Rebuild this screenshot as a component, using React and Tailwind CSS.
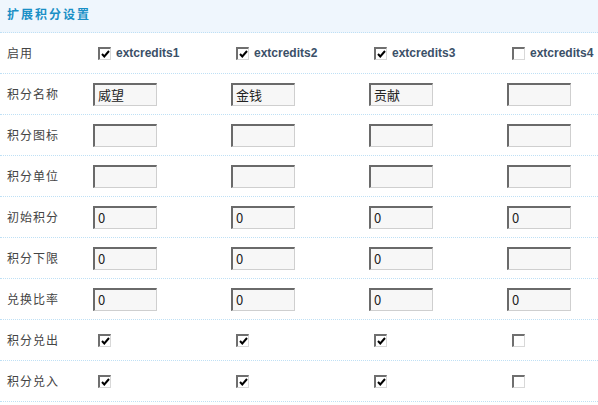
import React from "react";

const CJK = { fontFamily: '"Noto Sans CJK SC", "Noto Sans", sans-serif' };

function Check({ on }) {
  return (
    <span className="inline-flex w-[13px] h-[13px] box-border border-t-2 border-l-2 border-t-[#6f6f6f] border-l-[#6f6f6f] border-b border-r border-b-[#d8d8d8] border-r-[#d8d8d8] bg-white items-center justify-center shrink-0">
      {on && (
        <svg width="9" height="8" viewBox="0 0 9 8">
          <polyline points="1,4 3.3,6.5 8,1" fill="none" stroke="#000" strokeWidth="2" />
        </svg>
      )}
    </span>
  );
}

function Box({ v }) {
  return (
    <div
      className="w-[64px] h-[23px] box-border border-t-2 border-l-2 border-t-[#6a6a6a] border-l-[#6a6a6a] border-b border-r border-b-[#cfcfcf] border-r-[#cfcfcf] bg-[#f7f7f7] flex items-center pl-[3px] text-[13px] text-[#222] leading-none"
      style={CJK}
    >
      {v}
    </div>
  );
}

const rows = [
  { label: "积分名称", type: "box", vals: ["威望", "金钱", "贡献", ""] },
  { label: "积分图标", type: "box", vals: ["", "", "", ""] },
  { label: "积分单位", type: "box", vals: ["", "", "", ""] },
  { label: "初始积分", type: "box", vals: ["0", "0", "0", "0"] },
  { label: "积分下限", type: "box", vals: ["0", "0", "0", ""] },
  { label: "兑换比率", type: "box", vals: ["0", "0", "0", "0"] },
  { label: "积分兑出", type: "check", vals: [true, true, true, false] },
  { label: "积分兑入", type: "check", vals: [true, true, true, false] },
];

const rowCls =
  "grid grid-cols-[93px_138px_138px_138px_1fr] h-[41px] items-center border-b border-dotted border-[#bfe0f5]";

function Label({ children }) {
  return (
    <div className="pl-[7px] text-[12px] tracking-[1px] text-[#444]" style={CJK}>
      {children}
    </div>
  );
}

export default function App() {
  return (
    <div className="w-[598px] h-[405px] bg-white overflow-hidden">
      <div className="h-[33px] bg-[#eff6fd] border-b border-dotted border-[#bfe0f5] pl-[7px] pt-[1px]">
        <span className="text-[12px] font-bold tracking-[2px] text-[#1a8fc6] leading-[18px]" style={CJK}>
          扩展积分设置
        </span>
      </div>
      <div className={rowCls}>
        <Label>启用</Label>
        {[true, true, true, false].map((on, i) => (
          <div key={i} className="flex items-center gap-[5px] pl-[5px]">
            <Check on={on} />
            <span
              className="text-[12px] font-bold text-[#3b5068]"
              style={{ fontFamily: '"Liberation Sans", Arial, sans-serif' }}
            >
              extcredits{i + 1}
            </span>
          </div>
        ))}
      </div>
      {rows.map((r) => (
        <div key={r.label} className={rowCls}>
          <Label>{r.label}</Label>
          {r.vals.map((v, i) =>
            r.type === "box" ? (
              <div key={i}>
                <Box v={v} />
              </div>
            ) : (
              <div key={i} className="flex pl-[5px]">
                <Check on={v} />
              </div>
            )
          )}
        </div>
      ))}
    </div>
  );
}
